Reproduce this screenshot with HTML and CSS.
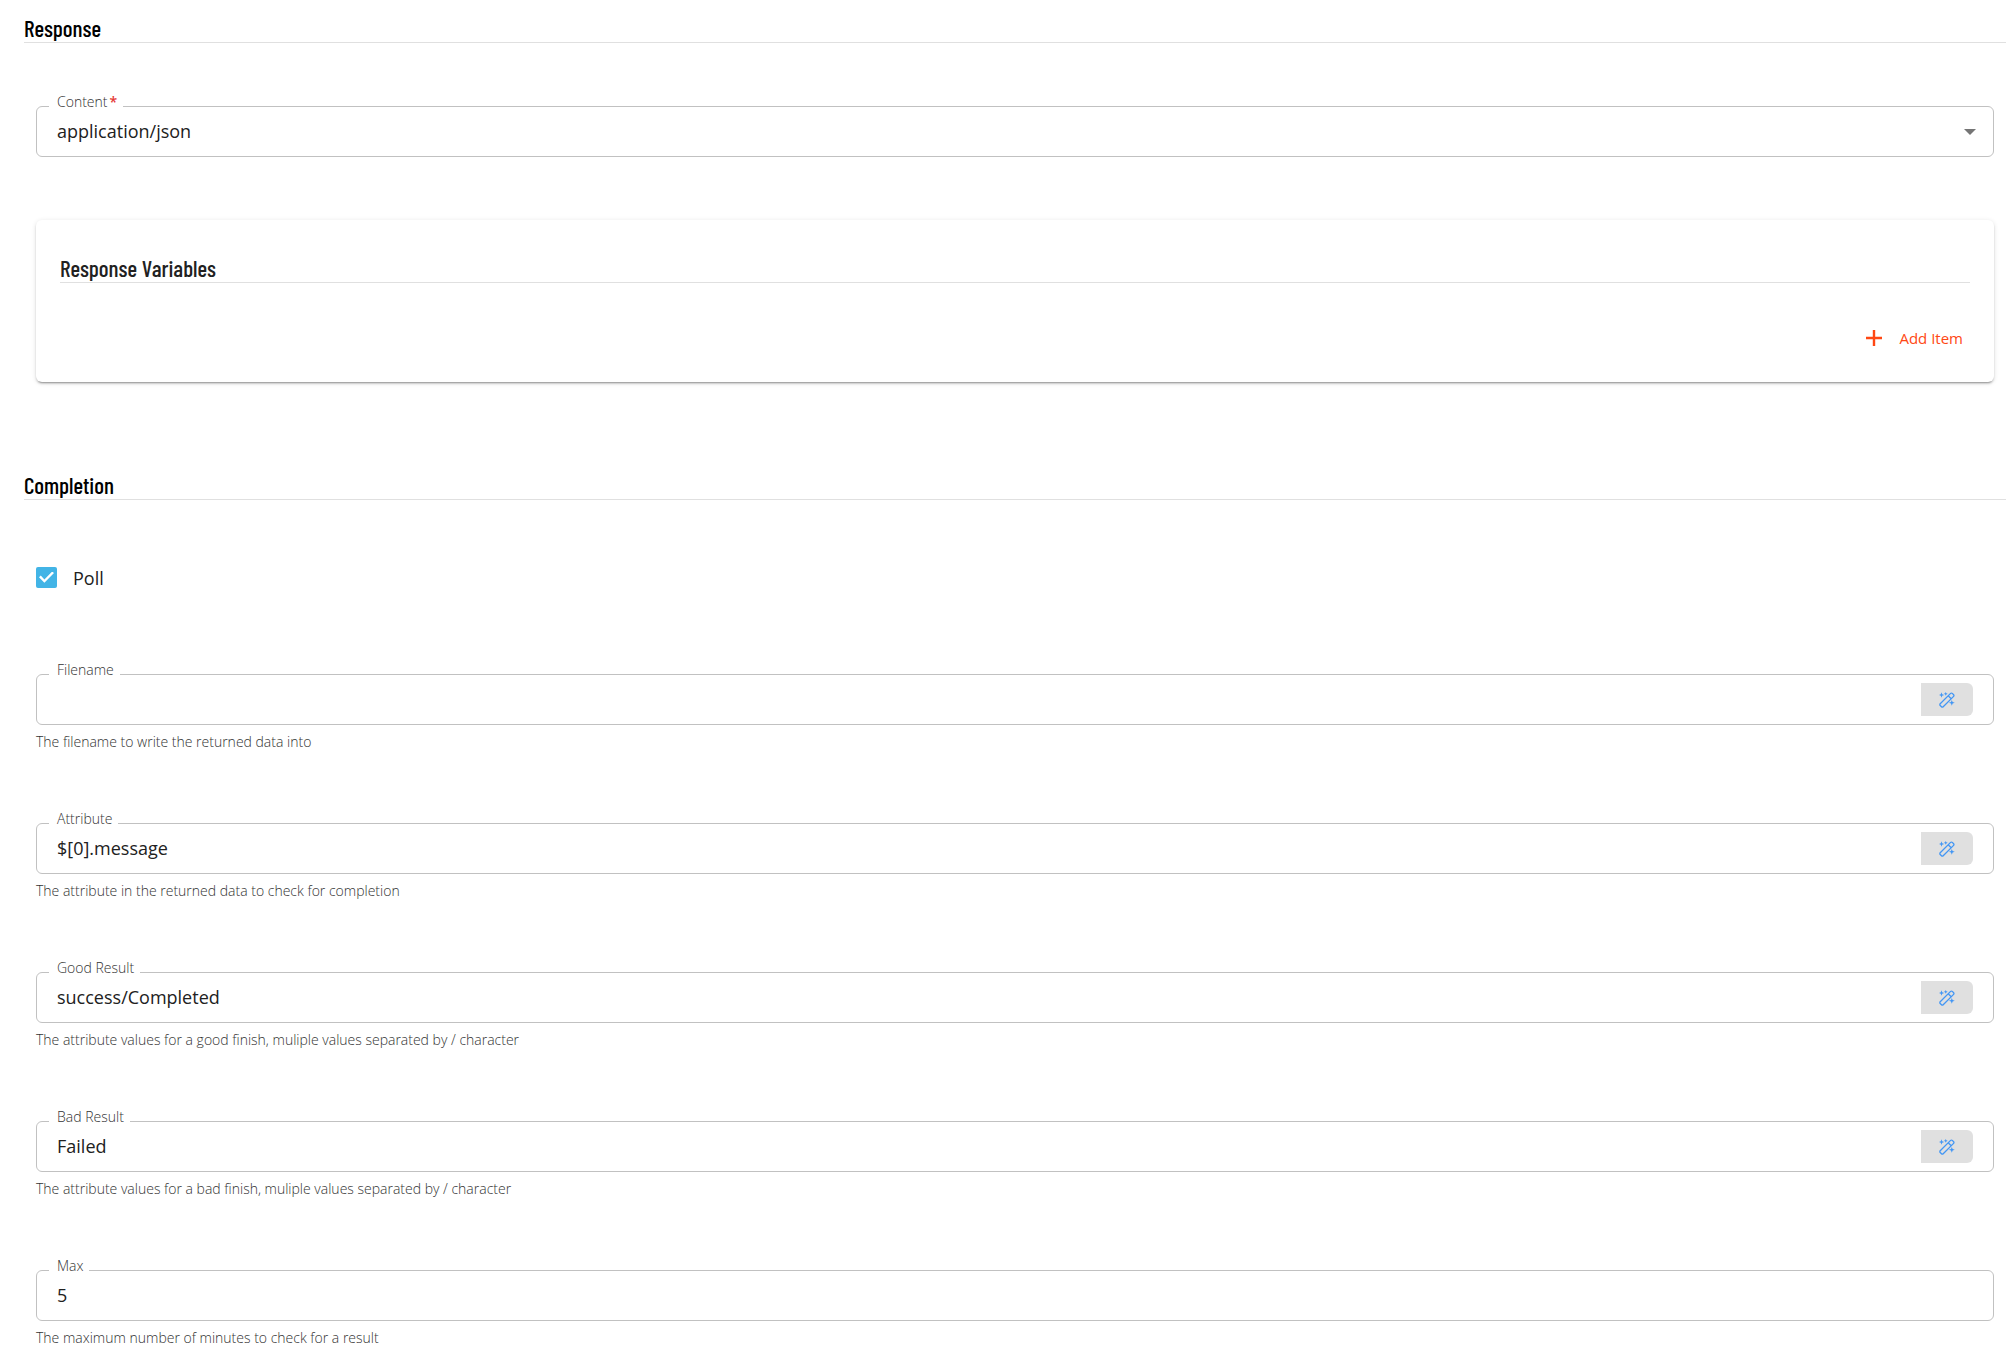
FILE: index.html
```
<!DOCTYPE html>
<html lang="en">
<head>
    <meta charset="UTF-8">
    <meta name="viewport" content="width=device-width, initial-scale=1.0">
    <title>Response and Completion</title>
    <link rel="stylesheet" href="styles.css">
</head>
<body>

    <!-- Wand icon, shared by the field buttons -->
    <svg class="icon-defs" width="0" height="0" aria-hidden="true">
        <symbol id="wand" viewBox="0 0 16 16">
            <path d="M1.2 11.8 11.6 1.4a1.2 1.2 0 0 1 1.7 0l1.3 1.3a1.2 1.2 0 0 1 0 1.7L4.2 14.8a1.2 1.2 0 0 1-1.7 0l-1.3-1.3a1.2 1.2 0 0 1 0-1.7zM9.2 3.8l3 3" fill="none" stroke="currentColor" stroke-width="1.3"/>
            <path d="M2.5 0.3 3.2 2.3 5.2 3 3.2 3.7 2.5 5.7 1.8 3.7 -0.2 3 1.8 2.3zM6.8 -0.2 7.3 1.2 8.7 1.8 7.3 2.4 6.8 3.8 6.2 2.4 4.8 1.8 6.2 1.2zM12.8 8 13.6 10 15.8 10.8 13.6 11.6 12.8 13.7 12 11.6 9.9 10.8 12 10z" fill="currentColor"/>
        </symbol>
    </svg>

    <form>
        <!-- Response -->
        <section class="section">
            <h2>Response</h2>
            <div class="section-body">
                <div class="field">
                    <div class="field-box">
                        <label for="content">Content<span class="required">*</span></label>
                        <select id="content" name="content" required>
                            <option>application/json</option>
                        </select>
                        <svg class="arrow" width="12" height="6" viewBox="0 0 12 6" aria-hidden="true"><path d="M0 0h12L6 6z"/></svg>
                    </div>
                </div>

                <div class="card">
                    <h3>Response Variables</h3>
                    <button type="button" class="add-button">
                        <svg width="16" height="16" viewBox="0 0 16 16" aria-hidden="true"><path d="M6.8 0h2.4v6.8H16v2.4H9.2V16H6.8V9.2H0V6.8h6.8z"/></svg>
                        Add Item
                    </button>
                </div>
            </div>
        </section>

        <!-- Completion -->
        <section class="section">
            <h2>Completion</h2>
            <div class="section-body">
                <div class="check">
                    <input type="checkbox" id="poll" name="poll" checked>
                    <label for="poll">Poll</label>
                </div>

                <div class="field">
                    <div class="field-box">
                        <label for="filename">Filename</label>
                        <input type="text" id="filename" name="filename" aria-describedby="filename-hint">
                        <button type="button" class="wand-button" aria-label="Filename expression"><svg width="16" height="16"><use href="#wand"/></svg></button>
                    </div>
                    <p class="hint" id="filename-hint">The filename to write the returned data into</p>
                </div>

                <div class="field">
                    <div class="field-box">
                        <label for="attribute">Attribute</label>
                        <input type="text" id="attribute" name="attribute" value="$[0].message" aria-describedby="attribute-hint">
                        <button type="button" class="wand-button" aria-label="Attribute expression"><svg width="16" height="16"><use href="#wand"/></svg></button>
                    </div>
                    <p class="hint" id="attribute-hint">The attribute in the returned data to check for completion</p>
                </div>

                <div class="field">
                    <div class="field-box">
                        <label for="good">Good Result</label>
                        <input type="text" id="good" name="good" value="success/Completed" aria-describedby="good-hint">
                        <button type="button" class="wand-button" aria-label="Good result expression"><svg width="16" height="16"><use href="#wand"/></svg></button>
                    </div>
                    <p class="hint" id="good-hint">The attribute values for a good finish, muliple values separated by / character</p>
                </div>

                <div class="field">
                    <div class="field-box">
                        <label for="bad">Bad Result</label>
                        <input type="text" id="bad" name="bad" value="Failed" aria-describedby="bad-hint">
                        <button type="button" class="wand-button" aria-label="Bad result expression"><svg width="16" height="16"><use href="#wand"/></svg></button>
                    </div>
                    <p class="hint" id="bad-hint">The attribute values for a bad finish, muliple values separated by / character</p>
                </div>

                <div class="field">
                    <div class="field-box">
                        <label for="max">Max</label>
                        <input type="text" id="max" name="max" value="5" aria-describedby="max-hint">
                    </div>
                    <p class="hint" id="max-hint">The maximum number of minutes to check for a result</p>
                </div>
            </div>
        </section>
    </form>

</body>
</html>
```

FILE: styles.css
```
* {
    box-sizing: border-box;
}

body {
    margin: 0;
    padding: 16px 6px 0 24px;
    background-color: #fff;
    color: #212121;
    font-family: "Open Sans", "Noto Sans", sans-serif;
    font-size: 18px;
}

.icon-defs {
    position: absolute;
}

/* Sections */
.section + .section {
    margin-top: 91px;
}

h2,
h3 {
    margin: 0;
    padding-bottom: 2px;
    border-bottom: 1px solid #e0e0e0;
    font-family: "Barlow Condensed", "Liberation Sans Narrow", "Roboto", sans-serif;
    font-size: 23px;
    font-weight: 500;
    line-height: 24px;
}

h2 {
    color: #000;
}

.section-body {
    padding: 63px 12px 0;
}

/* Fields */
.field + .field,
.field + .card {
    margin-top: 63px;
}

.field-box {
    position: relative;
    display: flex;
    align-items: center;
    height: 51px;
    padding-right: 20px;
    border: 1px solid #c1c1c1;
    border-radius: 6px;
}

.field-box label {
    position: absolute;
    top: -15px;
    left: 12px;
    padding: 0 6px 0 8px;
    background-color: #fff;
    color: #333;
    font-size: 14px;
    font-weight: 300;
    line-height: 20px;
}

.required {
    margin-left: 2px;
    color: #e53935;
    font-weight: 600;
}

.field-box input,
.field-box select {
    flex: 1;
    min-width: 0;
    height: 48px;
    padding: 0 20px 2px;
    border: none;
    outline: none;
    background: transparent;
    color: #212121;
    font-family: inherit;
    font-size: 18px;
    appearance: none;
}

.arrow {
    position: absolute;
    right: 17px;
    fill: #757575;
    pointer-events: none;
}

.wand-button {
    display: flex;
    align-items: center;
    justify-content: center;
    width: 52px;
    height: 33px;
    padding: 0;
    border: none;
    border-radius: 0 6px 6px 0;
    background-color: #e0e0e0;
    color: #4296f4;
    cursor: pointer;
}

.wand-button svg {
    overflow: visible;
}

.hint {
    margin: 0;
    padding: 7px 0 8px;
    color: #333;
    font-size: 14px;
    font-weight: 300;
    line-height: 20px;
}

/* Card */
.card {
    display: flex;
    flex-direction: column;
    padding: 36px 24px 24px;
    border-radius: 6px;
    box-shadow: 0 3px 1px -2px rgba(0, 0, 0, 0.2), 0 2px 2px 0 rgba(0, 0, 0, 0.14), 0 1px 5px 0 rgba(0, 0, 0, 0.12);
}

.add-button {
    display: flex;
    align-items: center;
    align-self: flex-end;
    gap: 17px;
    height: 40px;
    margin-top: 35px;
    padding: 0 7px;
    border: none;
    background: none;
    color: #ff4713;
    font-family: inherit;
    font-size: 15px;
    cursor: pointer;
}

.add-button svg {
    fill: currentColor;
}

/* Checkbox */
.check {
    display: flex;
    align-items: center;
    gap: 16px;
    height: 29px;
    margin-bottom: 82px;
}

.check input {
    display: grid;
    place-items: center;
    width: 21px;
    height: 21px;
    margin: 0;
    border-radius: 2px;
    background-color: #42b4e6;
    appearance: none;
}

.check input:checked::before {
    content: "";
    width: 15px;
    height: 12px;
    background-color: #fff;
    clip-path: polygon(0 47%, 12% 34%, 36% 67%, 88% 0, 100% 12%, 36% 94%);
}
```
